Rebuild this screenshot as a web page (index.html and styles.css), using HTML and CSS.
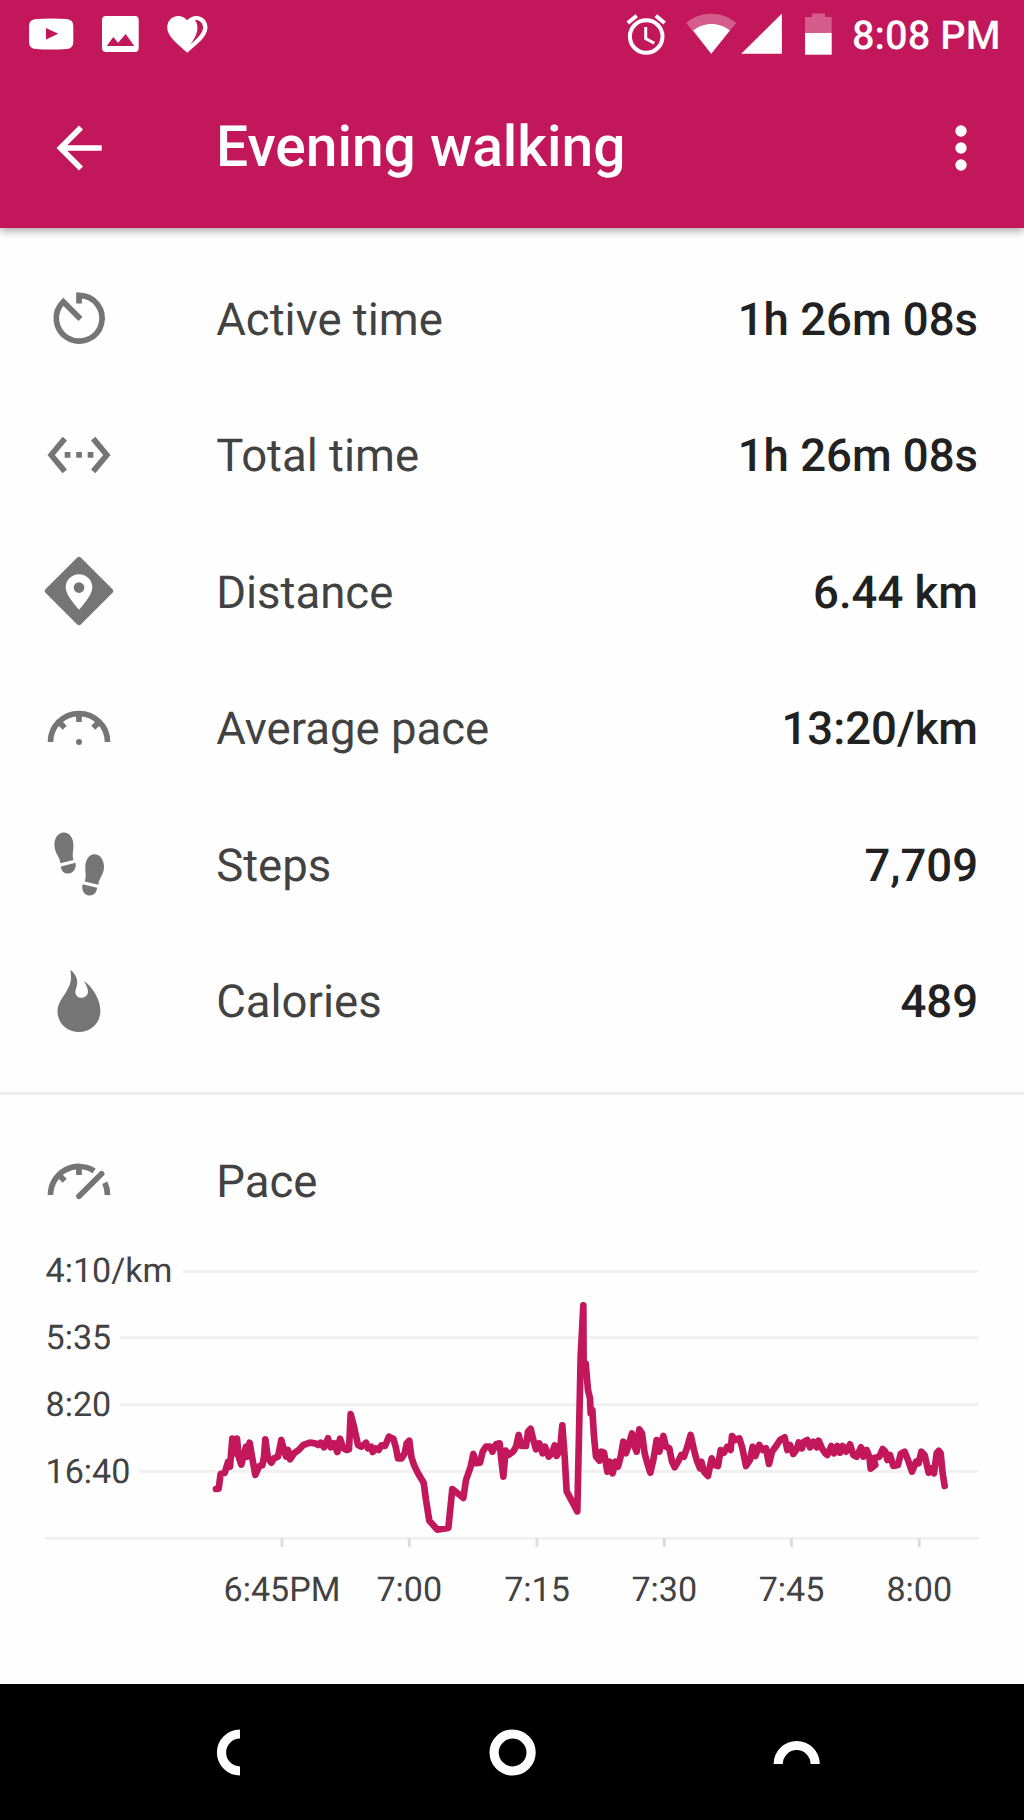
FILE: index.html
```
<!DOCTYPE html>
<html lang="en">
<head>
  <meta charset="UTF-8">
  <title>Evening walking</title>
  <link rel="stylesheet" href="styles.css">
</head>
<body>

  <header class="header">
    <div class="status-bar">
      <div class="status-left">
        <svg width="45" height="68" viewBox="29 0 45 68">
          <path fill="#fff" fill-rule="evenodd" d="M36 19Q51 17.800 66.500 19Q73.300 19.500 73.300 26V42Q73.300 48.500 66.500 49Q51 50 36 49Q29 48.500 29 42V26Q29 19.500 36 19zM46 28V39.500L58.300 33.700z"/>
        </svg>
        <svg width="37" height="68" viewBox="101 0 37 68">
          <path fill="#fff" fill-rule="evenodd" d="M105 16H134Q137.700 16 137.700 20V48Q137.700 52 134 52H105Q101 52 101 48V20Q101 16 105 16zM105.700 46H133.300L124.700 34L117 42.700L112.300 37z"/>
        </svg>
        <svg width="41" height="68" viewBox="167.500 0 41 68">
          <path fill="#fff" fill-rule="evenodd" d="M187.700 52.700C180 45.500 167.700 37 167.700 27.500C167.700 21 172.500 16 178.700 16C182.300 16 185.600 17.700 187.700 20.300C189.900 17.700 193.200 16 197 16C203.200 16 208 21 208 27.500C208 37 196 45.500 187.700 52.700zM195.500 20C200.500 27 197.500 36 190.800 44.500C198 38.500 204 32.500 203.500 27C203.200 22.500 200 19.800 195.500 20z"/>
        </svg>
      </div>
      <div class="status-right">
        <svg width="40" height="68" viewBox="626 0 40 68">
          <g fill="none" stroke="#fff">
            <circle cx="646.200" cy="36.500" r="16.300" stroke-width="4"/>
            <path stroke-width="3" d="M645.700 27V38.500L654.300 43.300"/>
            <path stroke-width="4" d="M627.800 23L636.700 15.700M655.800 15.700L664.600 23"/>
          </g>
        </svg>
        <svg class="wifi" width="51" height="68" viewBox="685.500 0 51 68">
          <path fill="#fff" fill-opacity=".3" d="M685.700 23C700 10.700 721.500 10.700 735.700 23L710.700 53.700z"/>
          <path fill="#fff" d="M692.700 30.500C703 21.800 719 21.800 729.300 30.500L710.700 53.700z"/>
        </svg>
        <svg class="signal" width="41" height="68" viewBox="740.500 0 41 68">
          <path fill="#fff" d="M740.700 53.700H781.400V13.500z"/>
        </svg>
        <svg class="battery" width="27" height="68" viewBox="805 0 27 68">
          <path fill="#fff" fill-opacity=".3" d="M805 17H812V13.500H825V17H831.700V33H805z"/>
          <path fill="#fff" d="M805 33H831.700V54.700H805z"/>
        </svg>
        <span class="clock">8:08 PM</span>
      </div>
    </div>

    <div class="app-bar">
      <svg class="back" width="46" height="46" viewBox="0 0 46 46">
        <path fill="none" stroke="#fff" stroke-width="5.700" d="M25 2.500L4.500 23L25 43.500M4.500 23H45.700"/>
      </svg>
      <h1>Evening walking</h1>
      <svg class="menu" width="12" height="46" viewBox="0 0 12 46">
        <circle cx="6" cy="6" r="5.700" fill="#fff"/>
        <circle cx="6" cy="23" r="5.700" fill="#fff"/>
        <circle cx="6" cy="40" r="5.700" fill="#fff"/>
      </svg>
    </div>
  </header>

  <main>
    <section class="stats">
      <div class="row">
        <svg class="icon" viewBox="0 0 72 72">
          <path class="line" d="M36 21.500V13.300A22.900 22.900 0 1 1 20.300 19.700L37.500 36.900"/>
        </svg>
        <span class="label">Active time</span>
        <span class="value">1h 26m 08s</span>
      </div>
      <div class="row">
        <svg class="icon" viewBox="0 0 72 72">
          <path class="line" d="M21.800 19.600L8.200 36L21.800 52.400M50.200 19.600L63.800 36L50.200 52.400"/>
          <path d="M21.700 33.100h5.700v5.700h-5.700zM33.200 33.100h5.700v5.700h-5.700zM44.700 33.100h5.700v5.700h-5.700z"/>
        </svg>
        <span class="label">Total time</span>
        <span class="value">1h 26m 08s</span>
      </div>
      <div class="row">
        <svg class="icon" viewBox="0 0 72 72">
          <path fill-rule="evenodd" d="M34 2.700Q36 .7 38 2.700L69.300 34Q71.300 36 69.300 38L38 69.300Q36 71.300 34 69.300L2.700 38Q.7 36 2.700 34zM36 54.800C40 49.500 49.300 40 49.300 32.500A13.300 13.300 0 0 0 22.700 32.500C22.700 40 32 49.500 36 54.800z"/>
          <circle cx="36" cy="32.600" r="5.300"/>
        </svg>
        <span class="label">Distance</span>
        <span class="value">6.44 km</span>
      </div>
      <div class="row">
        <svg class="icon" viewBox="0 0 72 72">
          <path class="line" d="M7.500 50A28.500 28.500 0 0 1 64.500 50M36 22V30M16 30L21.700 35.700M56 30L50.300 35.700"/>
          <circle cx="36" cy="50" r="3"/>
        </svg>
        <span class="label">Average pace</span>
        <span class="value">13:20/km</span>
      </div>
      <div class="row">
        <svg class="icon" viewBox="0 0 72 72">
          <path d="M17.400 35.200C17 29 11.400 25 11.400 17C11.400 9.500 15.500 4.500 20.700 4.500C26.500 4.500 30.400 10 30.400 17C30.400 23 29 27 30.400 31.900z"/>
          <path d="M18 38.400L32.500 34.700C33.500 40 31 44 27 45.200C22.500 46.500 18 44 18 38.400z"/>
          <path d="M41.700 53.600C43.500 48.500 42.300 45 42.300 39.500C42.300 32 46 26.200 51.500 26.200C57 26.200 61 31.500 61 39C61 47 55.500 50.500 55.500 56.700z"/>
          <path d="M39.600 56.300L54.100 59.800C53.500 65.500 50 68 45.600 67.400C41 66.700 38.300 62.500 39.600 56.300z"/>
        </svg>
        <span class="label">Steps</span>
        <span class="value">7,709</span>
      </div>
      <div class="row">
        <svg class="icon" viewBox="0 0 72 72">
          <path d="M27.400 4.700C31.500 8 34.800 13 34.200 18.500C33.800 22 32.400 24 32.400 27C32.400 30.500 35 32.800 38.500 32.800C42 32.800 45 30.300 45 26.500C45 22.500 42.500 19.500 41 16C49.500 22 57.400 34.500 57.400 45.800C57.400 58 48 67 36 67C24 67 14.500 58 14.500 46.500C14.500 34 28 26 28 12.500C28 9.500 27.700 7 27.400 4.700z"/>
        </svg>
        <span class="label">Calories</span>
        <span class="value">489</span>
      </div>
    </section>

    <section class="pace">
      <div class="row">
        <svg class="icon" viewBox="0 0 72 72">
          <path class="line" d="M7.500 50A28.500 28.500 0 0 1 51.100 25.800M61.800 37.800Q64.300 43 64.500 50M36 22V30M16 30L21.700 35.700"/>
          <path class="line round" d="M36 51.300L58.600 28.700"/>
        </svg>
        <span class="label">Pace</span>
      </div>

      <svg class="chart" viewBox="0 1249 1024 436">
        <g class="grid">
          <path d="M182.500 1271.300H978.500M120 1337.600H978.500M120 1404.600H978.500M139 1471.400H978.500M45.500 1538.300H978.500"/>
          <path class="ticks" d="M282 1538V1547M409.300 1538V1547M537 1538V1547M664.300 1538V1547M791.500 1538V1547M919.300 1538V1547"/>
        </g>
        <text x="45.500" y="1282.300">4:10/km</text>
        <text x="45.500" y="1348.800">5:35</text>
        <text x="45.500" y="1415.800">8:20</text>
        <text x="45.500" y="1482.500">16:40</text>
        <g text-anchor="middle">
          <text x="282" y="1601">6:45PM</text>
          <text x="409.300" y="1601">7:00</text>
          <text x="537" y="1601">7:15</text>
          <text x="664.300" y="1601">7:30</text>
          <text x="791.500" y="1601">7:45</text>
          <text x="919.300" y="1601">8:00</text>
        </g>
        <polyline class="pace-line" transform="translate(200 1290) scale(.33333)" points="
          48,597 56,596 62,551 74,549 84,516 90,530 97,446 104,490 111,446 116,500 124,524 138,470 142,500 149,458 156,500 166,555 178,528 187,526 192,500 196,448
          204,505 214,518 222,505 234,500 244,450 252,480 258,500 264,480 270,508 282,490 296,480 310,465 330,458 345,460 355,465 362,458 372,472 384,445 392,472
          402,460 412,486 420,446 430,475 440,480 447,478 452,372 462,410 474,465 484,470 498,458 504,475 514,470 518,486 528,475 536,480 544,466 555,468 567,440
          580,446 587,470 594,505 605,505 614,490 620,460 628,452 634,500 642,525 654,550 671,578 678,630 688,692 712,719 745,714 757,597 790,624 798,570
          812,530 820,492 828,520 840,518 848,485 858,470 870,470 877,485 888,463 899,460 904,510 910,560 917,482 927,494 940,484 948,470 956,435 964,468
          978,468 984,425 992,416 1000,450 1008,478 1018,460 1028,490 1035,470 1046,500 1056,490 1064,466 1070,498 1080,480 1087,406 1094,500 1100,604 1132,664
          1142,200 1150,46 1151,250 1157,220 1164,300 1170,325 1172,370 1177,360 1182,440 1188,500 1198,512 1204,485 1212,488 1222,545 1229,515 1238,550 1246,515 1254,530
          1262,500 1270,455 1278,490 1286,465 1296,430 1304,470 1310,485 1318,418 1326,430 1334,490 1342,520 1351,548 1360,510 1370,450 1378,485 1390,438
          1398,470 1408,475 1416,515 1424,532 1434,515 1444,495 1452,500 1462,470 1472,435 1482,480 1490,510 1500,535 1504,515 1512,545 1524,558 1535,505
          1544,525 1554,528 1562,480 1572,488 1582,470 1592,480 1596,438 1606,450 1618,445 1626,470 1638,528 1650,510 1658,470 1666,498 1678,465 1688,480
          1698,475 1707,522 1716,485 1730,466 1740,450 1754,442 1762,480 1770,465 1780,492 1790,478 1796,457 1806,475 1812,455 1822,450 1830,472 1840,455
          1850,472 1856,452 1866,475 1876,490 1882,495 1894,468 1902,490 1912,468 1920,488 1928,468 1938,485 1950,463 1960,495 1970,500 1983,472 1990,500
          2000,480 2008,500 2012,536 2026,525 2020,505 2038,500 2048,477 2056,485 2062,510 2070,495 2080,528 2094,525 2102,492 2114,485 2124,510 2136,545
          2148,515 2156,520 2164,485 2174,495 2186,548 2196,535 2202,550 2210,490 2216,482 2222,490 2228,550 2234,588"/>
      </svg>
    </section>
  </main>

  <nav class="nav-bar">
    <svg width="1024" height="136" viewBox="0 0 1024 136">
      <g fill="none" stroke="#fff" stroke-width="9.200">
        <path d="M240 50A18.500 18.500 0 0 0 240 87"/>
        <circle cx="512.600" cy="68.500" r="18.500"/>
        <path d="M778.200 80A18.500 18.500 0 0 1 815.200 80"/>
      </g>
    </svg>
  </nav>

</body>
</html>
```
FILE: styles.css
```
* {
  box-sizing: border-box;
}

body {
  margin: 0;
  width: 1024px;
  height: 1820px;
  display: flex;
  flex-direction: column;
  overflow: hidden;
  font-family: Roboto, sans-serif;
  background: #fefefe;
  color: #424242;
  text-rendering: geometricPrecision;
}

svg {
  display: block;
  flex: none;
}

.header {
  height: 227.500px;
  background: #c2185b;
  color: #fff;
  box-shadow: 0 3px 8px rgba(0,0,0,0.35);
}

.status-bar {
  height: 68px;
  padding: 0 24px 0 29px;
  display: flex;
  justify-content: space-between;
}

.status-left,
.status-right {
  display: flex;
}

.status-left {
  gap: 27px 28px;
}

.wifi {
  margin-left: 19.500px;
}

.signal {
  margin-left: 4px;
}

.battery {
  margin-left: 23.500px;
}

.clock {
  width: 148px;
  margin-left: 20px;
  line-height: 72px;
  font-size: 39.800px;
  font-weight: 500;
  white-space: nowrap;
}

.app-bar {
  height: 159.500px;
  padding: 0 57px 0 56px;
  display: flex;
  align-items: center;
}

h1 {
  flex: 1;
  margin: 0 0 2px 114px;
  font-size: 56.900px;
  font-weight: 500;
  line-height: 66px;
}

.stats {
  padding: 22.500px 0 22.500px;
  border-bottom: 3px solid #ececec;
}

.row {
  height: 136.530px;
  padding: 0 46px 0 43px;
  display: flex;
  align-items: center;
}

.icon {
  width: 72px;
  height: 72px;
  fill: #757575;
}

.line {
  fill: none;
  stroke: #757575;
  stroke-width: 5.700;
}

.round {
  stroke-linecap: round;
}

.label {
  flex: 1;
  margin-left: 101.200px;
  font-size: 45.500px;
  line-height: 54px;
  padding-top: 5px;
}

.value {
  font-size: 45.500px;
  line-height: 54px;
  font-weight: 500;
  color: #212121;
  padding-top: 5px;
}

.pace {
  padding-top: 18px;
}

.chart {
  width: 1024px;
  height: 436px;
  font-size: 34.100px;
  fill: #424242;
}

.grid {
  fill: none;
  stroke: #f0f0f0;
  stroke-width: 2.800;
}

.ticks {
  stroke: #dcdcdc;
}

.pace-line {
  fill: none;
  stroke: #c2185b;
  stroke-width: 20;
  stroke-linecap: round;
  stroke-linejoin: round;
}

main {
  flex: none;
  height: 1456px;
  overflow: hidden;
}

.header,
.nav-bar {
  flex: none;
  position: relative;
}

.nav-bar {
  height: 136.500px;
  background: #000;
}
```
